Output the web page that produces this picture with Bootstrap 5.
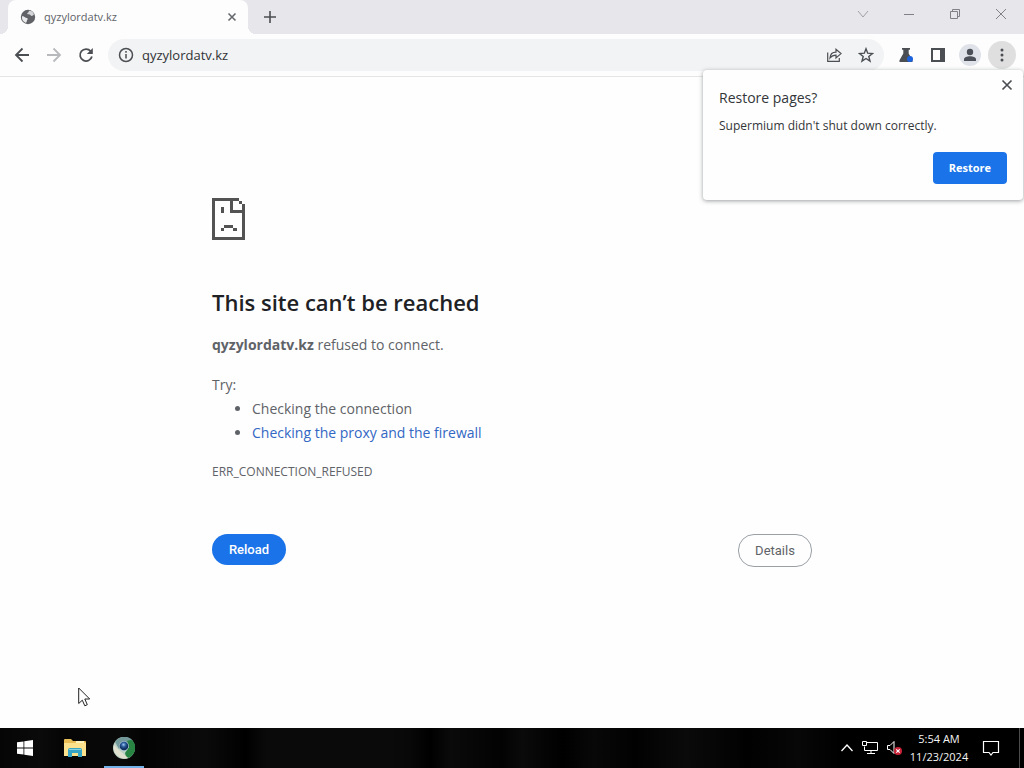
<!DOCTYPE html>
<html lang="en">
<head>
<meta charset="utf-8">
<meta name="viewport" content="width=device-width, initial-scale=1">
<title>qyzylordatv.kz</title>
<link href="https://cdn.jsdelivr.net/npm/bootstrap@5.3.0/dist/css/bootstrap.min.css" rel="stylesheet">
<style>
  body { font-family: "Open Sans", "Noto Sans", sans-serif; background: #fefefe; color: #333639; }
  svg { display: block; flex: none; }
  .icon-button { display: flex; align-items: center; justify-content: center; flex: none; border: 0; padding: 0; background: transparent; color: #4b4e52; }
  .tab-strip { height: 34px; background: #e7e6eb; padding-left: 8px; }
  .page-tab { position: relative; width: 240px; background: #fdfdfd; border-radius: 8px 8px 0 0; padding: 0 10px 0 12px; color: #5f6368; font-size: 11px; }
  .page-tab::before, .page-tab::after { content: ""; position: absolute; bottom: 0; width: 8px; height: 8px; }
  .page-tab::before { left: -8px; background: radial-gradient(circle at 0 0, transparent 8px, #fdfdfd 8px); }
  .page-tab::after { right: -8px; background: radial-gradient(circle at 100% 0, transparent 8px, #fdfdfd 8px); }
  .new-tab { width: 28px; margin-left: 8px; }
  .window-key { width: 46px; height: 28px; color: #808086; }
  .toolbar { position: relative; height: 43px; padding: 0 8px; background: #fdfdfd; border-bottom: 1px solid #e4e5e7; }
  .tool-key { width: 28px; height: 28px; border-radius: 50%; }
  .menu-key { background: #dfdfe0; }
  .address-bar { height: 32px; border-radius: 16px; background: #f2f3f4; padding: 0 4px 0 10px; }
  .address-field { min-width: 0; border: 0; padding: 0; background: transparent; color: #303236; font-size: 13px; line-height: 20px; }
  .restore-bubble { position: absolute; top: 36px; right: 1px; z-index: 5; width: 320px; padding: 16px; border-radius: 4px; background: #fefefe; box-shadow: 0 1px 4px rgba(60, 64, 67, .5); }
  .bubble-close { position: absolute; top: 8px; right: 9px; width: 14px; height: 14px; }
  .bubble-title { font-size: 14px; line-height: 24px; margin: 0 0 6px; font-weight: 400; }
  .bubble-text { font-size: 12px; line-height: 20px; margin: 0 0 16px; }
  .restore-key { height: 32px; padding: 0 16px; border: 0; border-radius: 4px; background: #1a73e8; color: #fff; font-size: 11px; font-weight: 700; }
  .error-page { width: 100%; max-width: 600px; padding-top: 121px; font-size: 14px; line-height: 24px; color: #5f6368; }
  .error-title { margin: 46px 0 15px; font-size: 22px; line-height: 32px; font-weight: 600; color: #202124; }
  .error-list { padding-left: 40px; margin-bottom: 15px; }
  .error-list a { color: #3267c4; text-decoration: none; }
  .error-code { font-size: 12px; margin-bottom: 50px; }
  .pill-key { min-width: 74px; padding: 0 16px; border-radius: 16px; font-family: Roboto, sans-serif; font-size: 13px; line-height: 31px; }
  .reload-key { border: 0; background: #1a73e8; color: #fff; font-weight: 500; }
  .details-key { border: 1px solid #9aa0a6; background: #fefefe; color: #5f6368; }
  .task-bar { height: 40px; color: #f5f5f5; background: linear-gradient(90deg, #050505 0, #0a0a0a 4%, #050505 6%, #090909 12%, #030303 14%, #0a0a0b 20%, #000 24%, #0a0a0a 26%, #0a0a0b 38%, #080808 40%, #000 42%, #0a0a0a 44%, #020202 49%, #0a0a0a 51%, #000 55%, #080808 58%, #010101 62%, #0a0a0b 67%, #010101 73%, #070707 78%, #000 82%); }
  .task-key { width: 50px; height: 40px; color: #fff; }
  .task-key.running { width: 40px; border-bottom: 2px solid #72b2e8; padding-top: 2px; }
  .tray { gap: 7px; margin-right: 7px; }
  .clock { width: 60px; margin-right: 13px; font-size: 11px; line-height: 18px; text-align: center; }
  .desktop-edge { width: 5px; margin-left: 19px; border-left: 1px solid #4c4c4c; }
  .pointer { position: absolute; left: 78px; top: 687px; z-index: 9; }
</style>
</head>
<body class="d-flex flex-column min-vh-100">
<header>
  <div class="tab-strip d-flex">
    <div class="page-tab d-flex align-items-center">
      <svg width="16" height="16" viewBox="0 0 16 16"><circle cx="8" cy="8" r="7.2" fill="#606267"/><path d="M2 7.2c1.4-.3 2.4.4 3.2 1.2.9.6 2.500 0 2.500 1.400 0 1.200-1 1.400-1 2.800 0 .7-.6 1.300-1.200 1.100A6.200 6.200 0 0 1 2 7.200Z" fill="#e8e9eb"/><path d="M8.700 1.900c.5 1.300-1 1.600-1.400 2.300-.4 1 .6 1.100 1.600 1.100 1.400 0 1.400 1.600 2.700 1.600 1 0 1.700-.7 2.300-1.300-.1-1.700-2-4-5.200-3.700Z" fill="#d5d6d9"/></svg>
      <span class="ms-2 flex-grow-1">qyzylordatv.kz</span>
      <button class="icon-button" type="button" aria-label="Close tab"><svg width="12" height="12" viewBox="0 0 12 12" stroke="#66696d" stroke-width="1.600"><path d="m2.500 2.500 7 7m0-7-7 7"/></svg></button>
    </div>
    <button class="icon-button new-tab" type="button" aria-label="New tab"><svg width="14" height="14" viewBox="0 0 14 14" stroke="currentColor" stroke-width="1.600"><path d="M7 1v12M1 7h12"/></svg></button>
    <div class="d-flex ms-auto">
      <button class="icon-button window-key" type="button" aria-label="Search tabs"><svg width="12" height="12" viewBox="0 0 12 12" fill="none" stroke="#a0a0a5"><path d="m1 3 5 6 5-6"/></svg></button>
      <button class="icon-button window-key" type="button" aria-label="Minimize"><svg width="12" height="12" viewBox="0 0 12 12" stroke="currentColor"><path d="M1 6.500h10"/></svg></button>
      <button class="icon-button window-key" type="button" aria-label="Restore window"><svg width="12" height="12" viewBox="0 0 12 12" fill="none" stroke="currentColor"><path d="M1.500 3.500h7v7h-7zM3.500 3.500v-2h7v7h-2"/></svg></button>
      <button class="icon-button window-key" type="button" aria-label="Close window"><svg width="12" height="12" viewBox="0 0 12 12" stroke="currentColor"><path d="m1 1 10 10M11 1 1 11"/></svg></button>
    </div>
  </div>
  <div class="toolbar d-flex align-items-center gap-1">
    <button class="icon-button tool-key" type="button" aria-label="Back"><svg width="16" height="16" viewBox="0 0 16 16" fill="none" stroke="currentColor" stroke-width="1.800"><path d="M15 8H2m6.500-6.500L2 8l6.500 6.500"/></svg></button>
    <button class="icon-button tool-key" type="button" aria-label="Forward"><svg width="16" height="16" viewBox="0 0 16 16" fill="none" stroke="#b7b9bc" stroke-width="1.800"><path d="M1 8h13M7.500 1.500 14 8l-6.500 6.500"/></svg></button>
    <button class="icon-button tool-key" type="button" aria-label="Reload page"><svg width="16" height="16" viewBox="0 0 16 16"><path d="M12.700 4.200A6 6 0 1 0 13.900 9.500" fill="none" stroke="currentColor" stroke-width="1.800"/><path d="M14.800 1v6H8.800z" fill="currentColor"/></svg></button>
    <div class="address-bar d-flex align-items-center flex-grow-1 ms-1">
      <svg width="16" height="16" viewBox="0 0 16 16" fill="none" stroke="#4b4e52" stroke-width="1.500"><circle cx="8" cy="8" r="6.500"/><path d="M8 7v4.500M8 4v1.800"/></svg>
      <input class="address-field flex-grow-1 ms-2" type="text" value="qyzylordatv.kz" aria-label="Address">
      <button class="icon-button tool-key" type="button" aria-label="Share"><svg width="16" height="16" viewBox="0 0 16 16" fill="none" stroke="currentColor" stroke-width="1.200"><path d="M1.700 5.500v8.800h11.600V11M4 11c.3-4 2.600-5.900 6-5.900V2.300l5 4.300-5 4.300V8.200C7.400 8.200 5.500 9 4 11Z"/></svg></button>
      <button class="icon-button tool-key ms-1" type="button" aria-label="Bookmark"><svg width="16" height="16" viewBox="0 0 16 16" fill="none" stroke="currentColor" stroke-width="1.400"><path d="m8 1.800 1.700 4.400 4.800.3-3.700 3 1.200 4.600L8 11.500l-4 2.600 1.200-4.600-3.700-3 4.800-.3z"/></svg></button>
    </div>
    <button class="icon-button tool-key ms-1" type="button" aria-label="Labs"><svg width="16" height="16" viewBox="0 0 16 16"><path d="M4 1h8v1.800h-1.300v3.700l3.800 6.800V15h-13v-1.700l3.800-6.800V2.800H4z" fill="#4b4e52"/><circle cx="12" cy="12" r="3" fill="#1c62dc"/></svg></button>
    <button class="icon-button tool-key" type="button" aria-label="Side panel"><svg width="16" height="16" viewBox="0 0 16 16"><path fill-rule="evenodd" d="M1 1h14v14H1zm2 2v10h7V3z" fill="#4b4e52"/></svg></button>
    <button class="icon-button tool-key" type="button" aria-label="Profile"><svg width="22" height="22" viewBox="0 0 22 22"><circle cx="11" cy="11" r="11" fill="#dfe2e8"/><circle cx="11" cy="8" r="3.200" fill="#4b5058"/><path d="M5 17v-1.800c0-2 3-3 6-3s6 1 6 3V17z" fill="#4b5058"/></svg></button>
    <button class="icon-button tool-key menu-key" type="button" aria-label="Menu"><svg width="16" height="16" viewBox="0 0 16 16" fill="currentColor"><circle cx="8" cy="3" r="1.500"/><circle cx="8" cy="8" r="1.500"/><circle cx="8" cy="13" r="1.500"/></svg></button>

    <section class="restore-bubble" aria-label="Restore pages">
      <button class="icon-button bubble-close" type="button" aria-label="Close"><svg width="14" height="14" viewBox="0 0 14 14" stroke="currentColor" stroke-width="1.700"><path d="m2.500 2.500 9 9m0-9-9 9"/></svg></button>
      <h2 class="bubble-title">Restore pages?</h2>
      <p class="bubble-text">Supermium didn't shut down correctly.</p>
      <div class="d-flex justify-content-end"><button class="restore-key" type="button">Restore</button></div>
    </section>
  </div>
</header>

<main class="flex-grow-1 d-flex justify-content-center">
  <div class="error-page">
    <svg width="33" height="42" viewBox="0 0 33 42" shape-rendering="crispEdges" fill="#535353"><path fill-rule="evenodd" d="M0 0h27v3h-6v9h9V9h3v33H0zM3 3v36h27V15H18V3z"/><path d="M27 3h3v3h-3zM30 6h3v3h-3zM9 9h3v6H9zM12 27h9v3h-9zM9 30h3v3H9zM21 30h4v3h-4z"/></svg>
    <h1 class="error-title">This site can’t be reached</h1>
    <p class="mb-3"><strong>qyzylordatv.kz</strong> refused to connect.</p>
    <p class="m-0">Try:</p>
    <ul class="error-list">
      <li>Checking the connection</li>
      <li><a href="#">Checking the proxy and the firewall</a></li>
    </ul>
    <div class="error-code">ERR_CONNECTION_REFUSED</div>
    <div class="d-flex justify-content-between align-items-start">
      <button class="pill-key reload-key" type="button">Reload</button>
      <button class="pill-key details-key" type="button">Details</button>
    </div>
  </div>
</main>

<footer class="task-bar d-flex align-items-center">
  <button class="icon-button task-key" type="button" aria-label="Start"><svg width="16" height="16" viewBox="0 0 16 16" fill="currentColor"><path d="M0 2.300 6.500 1.400v6.200H0zM7.300 1.300 16 0v7.600H7.300zM0 8.400h6.500v6.200L0 13.700zM7.300 8.400H16V16l-8.700-1.300z"/></svg></button>
  <button class="icon-button task-key" type="button" aria-label="File Explorer"><svg width="22" height="20" viewBox="0 0 22 20"><path d="M0 2q0-1 1-1h6l2 2h12q1 0 1 1v14H0z" fill="#e8bd55"/><path d="M0 5h22v13H0z" fill="#fbe18b"/><path d="M12 3h8v2h-8z" fill="#fff3bd"/><path d="M4 19v-7q0-2 2-2h10q2 0 2 2v7h-4v-4H8v4z" fill="#36a5c5"/><path d="M5 11h12v1H5z" fill="#8bd2df"/></svg></button>
  <button class="icon-button task-key running ms-1" type="button" aria-label="Supermium"><svg width="22" height="22" viewBox="0 0 22 22"><defs><radialGradient id="lens" cx=".45" cy=".35"><stop stop-color="#9ec9f4"/><stop offset=".5" stop-color="#2c5d9e"/><stop offset="1" stop-color="#102f5d"/></radialGradient></defs><circle cx="11" cy="11" r="11" fill="#bcd2c7"/><path d="M2 5A11 11 0 0 1 20 4L11 7 6 12z" fill="#73999a"/><path d="M14 4q5-2 6 0a11 11 0 0 1-5 17q-3-2-3-5l4-6z" fill="#278443"/><path d="M1 8l6 6 8 7A11 11 0 0 1 1 8Z" fill="#dfe1ce"/><circle cx="11" cy="9" r="4.800" fill="#9fbcd2"/><circle cx="11" cy="9" r="4.300" fill="url(#lens)"/></svg></button>
  <div class="d-flex align-items-center ms-auto h-100">
    <div class="tray d-flex align-items-center">
      <button class="icon-button text-white" type="button" aria-label="Hidden icons"><svg width="14" height="14" viewBox="0 0 14 14" fill="none" stroke="currentColor" stroke-width="1.300"><path d="m1.500 10 5.500-6 5.500 6"/></svg></button>
      <button class="icon-button text-white" type="button" aria-label="Network"><svg width="18" height="16" viewBox="0 0 18 16" fill="none" stroke="currentColor"><path d="M6 2.500h10.500v8h-13v-4M10 10.500v3M6 13.500h8M1.500 1.500h4v4h-4z"/></svg></button>
      <button class="icon-button text-white" type="button" aria-label="Volume muted"><svg width="16" height="16" viewBox="0 0 16 16"><path d="M1.500 5.500H4l4-4v12l-4-4H1.500z" fill="none" stroke="currentColor"/><circle cx="12" cy="11" r="4" fill="#c92237"/><path d="m10.300 9.300 3.400 3.400m0-3.400-3.400 3.400" stroke="#fff" stroke-width="1.200"/></svg></button>
    </div>
    <time class="clock" datetime="2024-11-23T05:54">5:54 AM<br>11/23/2024</time>
    <button class="icon-button text-white" type="button" aria-label="Notifications"><svg width="18" height="18" viewBox="0 0 18 18" fill="none" stroke="currentColor" stroke-width="1.200"><path d="M1.500 2.500h15v11H11l-2 2.500-2-2.500H1.500z"/></svg></button>
    <div class="desktop-edge h-100"></div>
  </div>
</footer>
<svg class="pointer" width="13" height="20" viewBox="0 0 13 20" aria-hidden="true"><path d="M.7 1v15.500l3.600-3.300 2.500 5.600 2.500-1.100L6.800 12h4.900z" fill="#fff" stroke="#222"/></svg>
<script src="https://cdn.jsdelivr.net/npm/bootstrap@5.3.0/dist/js/bootstrap.bundle.min.js"></script>
</body>
</html>
